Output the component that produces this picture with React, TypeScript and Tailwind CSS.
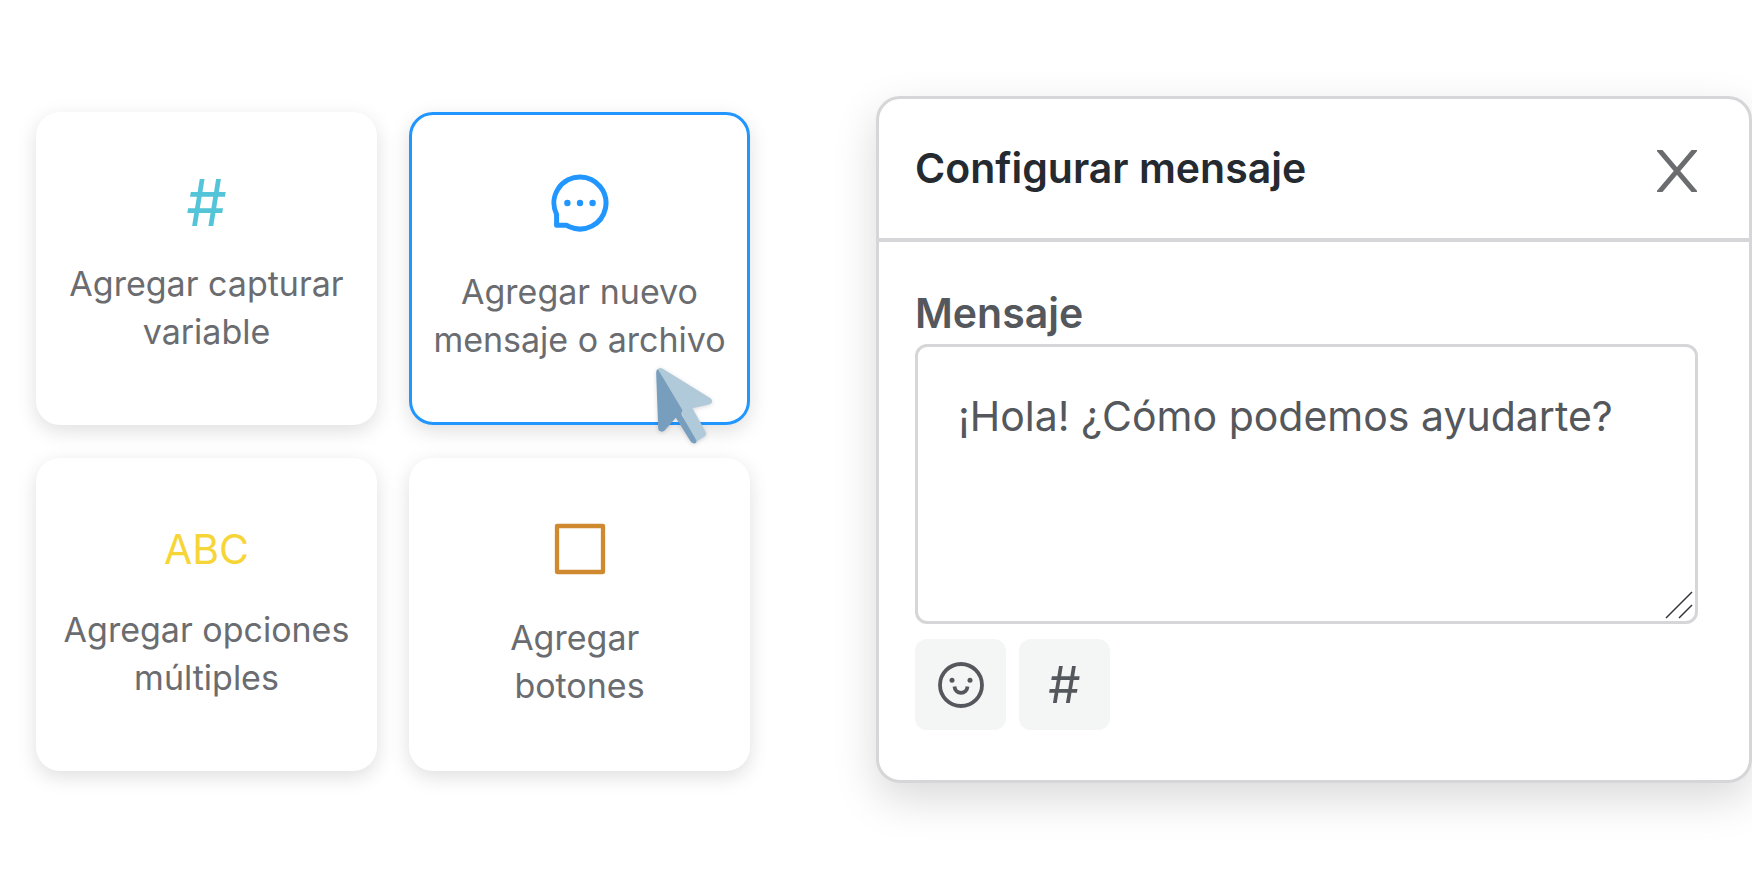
import { useState, type ReactNode } from "react";

function MessageIcon() {
  return (
    <svg viewBox="0 0 58 58" className="size-[58px]" fill="none" stroke="#2196ff" strokeWidth="5" strokeLinejoin="round" aria-hidden="true">
      <path d="M29 3a26 26 0 1 1 -10.500 49.800 L15.500 51.300 H5.600 V40.500 A26 26 0 0 1 29 3Z" />
      <g fill="#2196ff" stroke="none">
        <circle cx="16.400" cy="29" r="3.200" />
        <circle cx="29" cy="29" r="3.200" />
        <circle cx="41.600" cy="29" r="3.200" />
      </g>
    </svg>
  );
}

function SquareIcon() {
  return (
    <svg viewBox="0 0 52 52" className="size-[52px]" fill="none" stroke="#cf8a30" strokeWidth="4.300" strokeLinejoin="round" aria-hidden="true">
      <path d="M3 3h46v46H3Z" />
    </svg>
  );
}

function CloseIcon() {
  return (
    <svg viewBox="0 0 40 42" className="h-[42px] w-10" fill="none" stroke="#6a6c70" strokeWidth="5" aria-hidden="true">
      <path d="M0 -2.600 L40 44.600 M40 -2.600 L0 44.600" />
    </svg>
  );
}

function SmileIcon() {
  return (
    <svg viewBox="0 0 46 46" className="size-[46px]" fill="none" stroke="#54575c" strokeWidth="3.800" aria-hidden="true">
      <circle cx="23" cy="23" r="21" />
      <path d="M16.500 24.500c.3 3.900 3 6.300 6.500 6.300s6.200-2.400 6.500-6.300" />
      <g fill="#54575c" stroke="none">
        <circle cx="14" cy="18.300" r="2.500" />
        <circle cx="32" cy="18.300" r="2.500" />
      </g>
    </svg>
  );
}

function Pointer() {
  return (
    <svg
      viewBox="0 0 170 228"
      className="pointer-events-none absolute right-[34px] bottom-[-22px] z-10 h-[76px] w-[57px] overflow-visible drop-shadow-sm"
      aria-hidden="true"
    >
      <path
        d="M5 3 Q12 -2 20 2 L163 91 Q171 98 166 105 Q163 109 156 110 L109 121 L149 193 Q152 199 146 205 L124 219 Q118 222 112 224 L74 128Z"
        fill="#b1cada"
      />
      <path
        d="M5 3 Q0 6 0 14 L6 181 Q7 191 17 191 Q22 191 26 187 L59 149 L103 220 Q108 228 117 226 Q123 224 120 216 L77 142 Q74 135 79 127Z"
        fill="#789ebe"
      />
    </svg>
  );
}

type ActionCardProps = {
  icon: ReactNode;
  children: ReactNode;
  selected?: boolean;
  spacious?: boolean;
  onSelect: () => void;
};

function ActionCard({ icon, children, selected, spacious, onSelect }: ActionCardProps) {
  return (
    <button
      type="button"
      aria-pressed={selected}
      onClick={onSelect}
      className={`relative flex min-h-[313px] cursor-pointer flex-col items-center rounded-3xl border-[3px] bg-white pt-14 text-center text-[34px] leading-[48px] text-[#6a6c70] shadow-[0_6px_20px_rgba(0,0,0,0.13)] ${
        spacious ? "gap-[33px]" : "gap-[25px]"
      } ${selected ? "border-[#2196ff]" : "border-transparent"}`}
    >
      <span className="flex h-16 items-center">{icon}</span>
      <span>{children}</span>
      {selected && <Pointer />}
    </button>
  );
}

export default function App() {
  const [selected, setSelected] = useState("mensaje");
  const [message, setMessage] = useState("¡Hola! ¿Cómo podemos ayudarte?");

  return (
    <main className="grid min-h-screen grid-cols-[minmax(0,714fr)_minmax(0,876fr)] items-start gap-[126px] bg-white pt-24 pb-24 pl-9 font-['Inter','Liberation_Sans',sans-serif]">
      <section className="grid grid-cols-2 gap-x-8 gap-y-[33px] pt-4">
        <ActionCard
          icon={<span className="text-[64px] leading-16 text-[#54c4d8]">#</span>}
          selected={selected === "variable"}
          onSelect={() => setSelected("variable")}
        >
          Agregar capturar
          <br />
          variable
        </ActionCard>
        <ActionCard icon={<MessageIcon />} spacious selected={selected === "mensaje"} onSelect={() => setSelected("mensaje")}>
          Agregar nuevo
          <br />
          mensaje o archivo
        </ActionCard>
        <ActionCard
          icon={<span className="text-[41px] leading-16 text-[#f6d538]">ABC</span>}
          selected={selected === "opciones"}
          onSelect={() => setSelected("opciones")}
        >
          Agregar opciones
          <br />
          múltiples
        </ActionCard>
        <ActionCard icon={<SquareIcon />} spacious selected={selected === "botones"} onSelect={() => setSelected("botones")}>
          Agregar{"\u00a0"}
          <br />
          botones
        </ActionCard>
      </section>

      <section className="rounded-3xl border-[3px] border-[#d6d6d8] bg-white shadow-[0_16px_44px_rgba(0,0,0,0.15)]">
        <header className="flex items-center justify-between border-b-4 border-[#d6d6d8] pt-[38px] pr-[52px] pb-[34px] pl-9">
          <h1 className="pb-1 text-[41px] leading-[63px] font-semibold text-[#252a31]">Configurar mensaje</h1>
          <button type="button" aria-label="Cerrar" className="cursor-pointer">
            <CloseIcon />
          </button>
        </header>
        <div className="pt-11 pr-[51px] pb-[50px] pl-9">
          <label htmlFor="mensaje" className="block pb-1 text-[41px] leading-[54px] font-semibold text-[#54575c]">
            Mensaje
          </label>
          <div className="relative">
            <textarea
              id="mensaje"
              value={message}
              onChange={(event) => setMessage(event.target.value)}
              className="block h-[280px] w-full resize-none rounded-xl border-[3px] border-[#d6d6d8] bg-white px-10 py-9 text-[41px] leading-[66px] text-[#54575c] outline-none"
            />
            <svg
              viewBox="0 0 28 28"
              className="pointer-events-none absolute right-[5px] bottom-[5px] size-7"
              stroke="#33363b"
              strokeWidth="1.500"
              aria-hidden="true"
            >
              <path d="M1 27 27 1M14 27 27 14" />
            </svg>
          </div>
          <div className="mt-[15px] flex gap-[13px]">
            <button type="button" aria-label="Insertar emoji" className="flex size-[91px] cursor-pointer items-center justify-center rounded-xl bg-[#f4f6f6]">
              <SmileIcon />
            </button>
            <button
              type="button"
              aria-label="Insertar variable"
              className="flex size-[91px] cursor-pointer items-center justify-center rounded-xl bg-[#f4f6f6] text-[51px] leading-16 text-[#54575c]"
            >
              #
            </button>
          </div>
        </div>
      </section>
    </main>
  );
}
